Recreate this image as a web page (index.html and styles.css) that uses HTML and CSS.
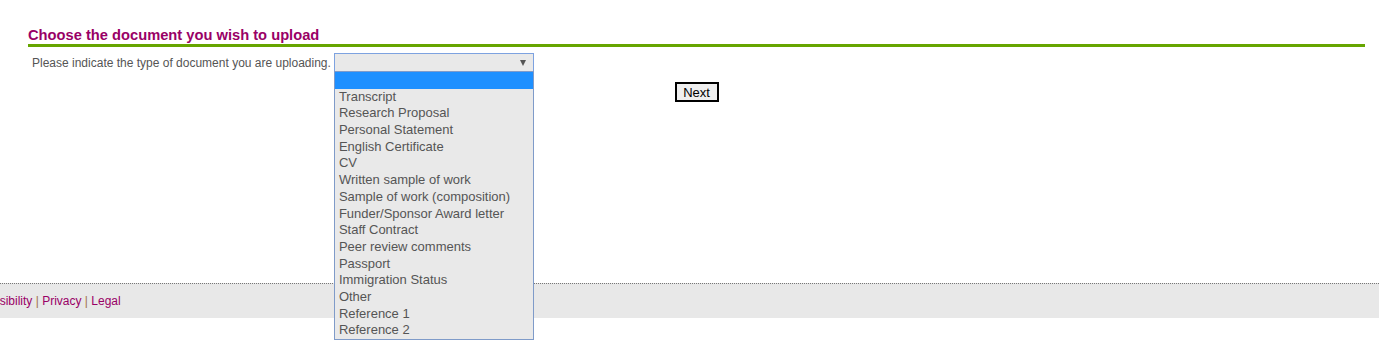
FILE: index.html
```html
<!DOCTYPE html>
<html lang="en">
<head>
    <meta charset="UTF-8">
    <meta name="viewport" content="width=device-width, initial-scale=1.0">
    <title>Upload Document</title>
    <link rel="stylesheet" href="styles.css">
</head>
<body>
    <div class="content">
        <h2>Choose the document you wish to upload</h2>
        <div class="doc-row">
            <label class="doc-label">Please indicate the type of document you are uploading.</label>
            <div class="select-wrap">
                <div class="select-box"><span class="arrow"></span></div>
                <ul class="select-list">
                    <li class="selected">&nbsp;</li>
                    <li>Transcript</li>
                    <li>Research Proposal</li>
                    <li>Personal Statement</li>
                    <li>English Certificate</li>
                    <li>CV</li>
                    <li>Written sample of work</li>
                    <li>Sample of work (composition)</li>
                    <li>Funder/Sponsor Award letter</li>
                    <li>Staff Contract</li>
                    <li>Peer review comments</li>
                    <li>Passport</li>
                    <li>Immigration Status</li>
                    <li>Other</li>
                    <li>Reference 1</li>
                    <li>Reference 2</li>
                </ul>
            </div>
        </div>
        <div class="actions">
            <button class="next-btn">Next</button>
        </div>
    </div>

    <div class="footer">
        <span class="footer-links">
            <a href="#">Accessibility</a> | <a href="#">Privacy</a> | <a href="#">Legal</a>
        </span>
    </div>
</body>
</html>
```

FILE: styles.css
```css
html, body {
    min-height: 100%;
}
body {
    margin: 0;
    min-height: 362px;
    font-family: "Liberation Sans", Arial, sans-serif;
    background-color: white;
}
.content {
    box-sizing: border-box;
    min-height: 283px;
    padding: 27px 14px 0 28px;
}
.content h2 {
    margin: 0;
    font-size: 14.7px;
    line-height: 16px;
    font-weight: bold;
    color: #990066;
    padding-bottom: 1px;
    border-bottom: 3px solid #66a500;
}
.doc-row {
    display: flex;
    align-items: center;
    margin-top: 6px;
    padding-left: 4px;
}
.doc-label {
    font-size: 12px;
    color: #555;
    margin-right: 3px;
}
.select-wrap {
    position: relative;
}
.select-box {
    box-sizing: border-box;
    width: 200px;
    height: 19px;
    background-color: #e9e9e9;
    border: 1px solid #7da2e0;
    display: flex;
    align-items: center;
    justify-content: flex-end;
    padding-right: 7px;
}
.arrow {
    width: 0;
    height: 0;
    border-left: 3.5px solid transparent;
    border-right: 3.5px solid transparent;
    border-top: 6px solid #555;
}
.select-list {
    position: absolute;
    top: 18px;
    left: 0;
    box-sizing: border-box;
    width: 200px;
    margin: 0;
    padding: 0;
    list-style: none;
    background-color: #e9e9e9;
    border: 1px solid #7f9bc9;
    z-index: 10;
}
.select-list li {
    font-size: 13px;
    height: 16.7px;
    line-height: 16.7px;
    padding-left: 4px;
    color: #555;
    white-space: nowrap;
}
.select-list li.selected {
    background-color: #1e90ff;
}
.actions {
    display: flex;
    justify-content: center;
    margin-top: 10px;
}
.next-btn {
    box-sizing: border-box;
    height: 20px;
    width: 44px;
    padding: 0;
    font-family: "Liberation Sans", Arial, sans-serif;
    font-size: 13px;
    color: black;
    background-color: #efefef;
    border: 2px solid black;
}
.footer {
    border-top: 1px dotted #777;
    background-color: #e8e8e8;
    height: 34px;
    line-height: 34px;
    font-size: 12px;
    color: #a0704a;
    white-space: nowrap;
}
.footer-links {
    display: inline-block;
    margin-left: -33px;
}
.footer a {
    color: #990066;
    text-decoration: none;
}
```
